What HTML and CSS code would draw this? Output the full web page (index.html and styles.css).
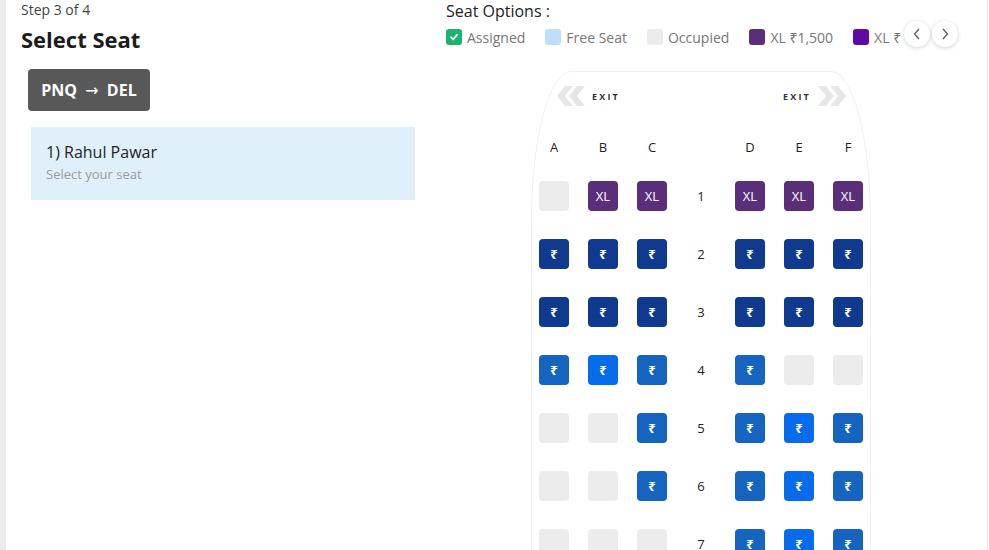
FILE: index.html
```html
<!DOCTYPE html>
<html lang="en">
<head>
<meta charset="utf-8">
<title>Select Seat</title>
<link rel="stylesheet" href="styles.css">
</head>
<body>
<div class="page">
  <div class="rail"></div>
  <section class="left">
    <div class="step">Step 3 of 4</div>
    <h1 class="title">Select Seat</h1>
    <button class="route">PNQ <span class="arrow">→</span> DEL</button>
    <div class="pax">
      <div class="pax-name">1) Rahul Pawar</div>
      <div class="pax-sub">Select your seat</div>
    </div>
  </section>
  <section class="right">
    <div class="opt-title">Seat Options :</div>
    <div class="legend-row">
      <div class="legend">
        <span class="lg"><span class="sw sw-check"><svg width="10" height="10" viewBox="0 0 10 10"><path d="M2 5.2 L4.2 7.3 L8 2.8" fill="none" stroke="#fff" stroke-width="1.8" stroke-linecap="round" stroke-linejoin="round"/></svg></span>Assigned</span>
        <span class="lg"><span class="sw sw-free"></span>Free Seat</span>
        <span class="lg"><span class="sw sw-occ"></span>Occupied</span>
        <span class="lg"><span class="sw sw-xl"></span>XL ₹1,500</span>
        <span class="lg"><span class="sw sw-xl2"></span>XL ₹1,000</span>
      </div>
      <button class="nav"><svg width="10" height="12" viewBox="0 0 10 12"><path d="M7 1 L2.5 6 L7 11" fill="none" stroke="#555" stroke-width="1.2"/></svg></button>
      <button class="nav"><svg width="10" height="12" viewBox="0 0 10 12"><path d="M3 1 L7.5 6 L3 11" fill="none" stroke="#555" stroke-width="1.2"/></svg></button>
    </div>
    <div class="plane">
      <div class="exit-row">
        <div class="exit exit-l">
          <svg width="32" height="20" viewBox="0 0 32 20"><path d="M10 0 H18 L10 10 L18 20 H10 L2 10 Z" fill="#e6e6e6"/><path d="M22 0 H30 L22 10 L30 20 H22 L14 10 Z" fill="#e6e6e6"/></svg>
          <span class="exit-t">EXIT</span>
        </div>
        <div class="exit exit-r">
          <span class="exit-t">EXIT</span>
          <svg width="32" height="20" viewBox="0 0 32 20"><path d="M2 0 H10 L18 10 L10 20 H2 L10 10 Z" fill="#e6e6e6"/><path d="M14 0 H22 L30 10 L22 20 H14 L22 10 Z" fill="#e6e6e6"/></svg>
        </div>
      </div>
      <div class="cols">
        <span>A</span><span>B</span><span>C</span><span></span><span>D</span><span>E</span><span>F</span>
      </div>
      <div class="grid">
        <span class="seat occ"></span><span class="seat xl">XL</span><span class="seat xl">XL</span><span class="rn">1</span><span class="seat xl">XL</span><span class="seat xl">XL</span><span class="seat xl">XL</span>

        <span class="seat dk">₹</span><span class="seat dk">₹</span><span class="seat dk">₹</span><span class="rn">2</span><span class="seat dk">₹</span><span class="seat dk">₹</span><span class="seat dk">₹</span>

        <span class="seat dk">₹</span><span class="seat dk">₹</span><span class="seat dk">₹</span><span class="rn">3</span><span class="seat dk">₹</span><span class="seat dk">₹</span><span class="seat dk">₹</span>

        <span class="seat md">₹</span><span class="seat br">₹</span><span class="seat md">₹</span><span class="rn">4</span><span class="seat md">₹</span><span class="seat occ"></span><span class="seat occ"></span>

        <span class="seat occ"></span><span class="seat occ"></span><span class="seat md">₹</span><span class="rn">5</span><span class="seat md">₹</span><span class="seat br">₹</span><span class="seat md">₹</span>

        <span class="seat occ"></span><span class="seat occ"></span><span class="seat md">₹</span><span class="rn">6</span><span class="seat md">₹</span><span class="seat br">₹</span><span class="seat md">₹</span>

        <span class="seat occ"></span><span class="seat occ"></span><span class="seat occ"></span><span class="rn">7</span><span class="seat md">₹</span><span class="seat br">₹</span><span class="seat md">₹</span>
      </div>
    </div>
  </section>
</div>
</body>
</html>
```
FILE: styles.css
```css
* { box-sizing: border-box; }
html, body { margin: 0; padding: 0; background: #fff; }
body {
  font-family: "Open Sans", "Noto Sans", "DejaVu Sans", sans-serif;
  width: 989px;
  height: 550px;
  overflow: hidden;
}
.page {
  display: flex;
  width: 988px;
  height: 550px;
  border-right: 1px solid #e8e8e8;
}
.rail { width: 6px; flex: none; background: #ececec; }
.left {
  width: 440px;
  flex: none;
  padding-left: 15px;
}
.step {
  font-size: 14px;
  line-height: 20px;
  color: #444;
}
.title {
  margin: 4px 0 0;
  font-size: 22px;
  line-height: 30px;
  font-weight: 700;
  color: #1c1c1c;
}
.route {
  display: block;
  margin: 15px 0 0 7px;
  width: 122px;
  height: 42px;
  border: 0;
  border-radius: 4px;
  background: #585858;
  color: #fff;
  font-family: inherit;
  font-size: 16px;
  font-weight: 700;
  padding: 0;
}
.route .arrow { margin: 0 4px; font-weight: 400; }
.pax {
  margin: 16px 0 0 10px;
  width: 384px;
  height: 73px;
  background: #e0f0fb;
  padding: 13px 15px 0;
}
.pax-name { font-size: 16px; line-height: 24px; color: #222; }
.pax-sub { font-size: 13px; line-height: 20px; color: #9a9a9a; }

.right { flex: 1; }
.opt-title {
  font-size: 16px;
  line-height: 22px;
  color: #222;
  font-weight: 500;
}
.legend-row {
  display: flex;
  align-items: center;
  height: 26px;
  margin-top: 2px;
}
.legend {
  width: 456px;
  flex: none;
  display: flex;
  gap: 20px;
  overflow: hidden;
  white-space: nowrap;
}
.lg {
  display: flex;
  align-items: center;
  gap: 5px;
  font-size: 14px;
  color: #777;
  flex: none;
}
.sw {
  width: 16px;
  height: 16px;
  border-radius: 3px;
  display: flex;
  align-items: center;
  justify-content: center;
}
.sw-check { background: #1db36e; }
.sw-free { background: #bddff7; }
.sw-occ { background: #ececec; }
.sw-xl { background: #5a2e78; }
.sw-xl2 { background: #5d0aa7; }
.nav {
  width: 26px;
  height: 26px;
  border-radius: 50%;
  border: 0;
  background: #fff;
  box-shadow: 0 1px 4px rgba(0,0,0,0.18);
  display: flex;
  align-items: center;
  justify-content: center;
  padding: 0;
  margin-left: 2px;
  margin-top: -6px;
}
.plane {
  margin: 21px 0 0 85px;
  width: 340px;
  height: 600px;
  border: 1px solid #efefef;
  border-bottom: 0;
  border-radius: 40px 40px 0 0 / 150px 150px 0 0;
  padding: 14px 7px 0 7px;
}
.exit-row {
  display: flex;
  justify-content: space-between;
  padding: 0 15px 0 16px;
  height: 20px;
}
.exit { display: flex; align-items: center; gap: 5px; }
.exit-t {
  font-size: 9px;
  font-weight: 700;
  letter-spacing: 2.2px;
  color: #333;
}
.cols {
  display: grid;
  grid-template-columns: repeat(7, 30px);
  column-gap: 19px;
  margin-top: 31px;
  height: 20px;
  line-height: 20px;
  font-size: 13px;
  color: #222;
  text-align: center;
}
.grid {
  display: grid;
  grid-template-columns: repeat(7, 30px);
  grid-auto-rows: 30px;
  column-gap: 19px;
  row-gap: 28px;
  margin-top: 24px;
}
.seat {
  width: 30px;
  height: 30px;
  border-radius: 4px;
  display: flex;
  align-items: center;
  justify-content: center;
  color: #fff;
  font-size: 13px;
  font-weight: 700;
}
.rn {
  display: flex;
  align-items: center;
  justify-content: center;
  font-size: 13px;
  color: #222;
}
.occ { background: #ececec; }
.xl { background: #5a2e78; font-size: 13px; font-weight: 400; }
.dk { background: #0f3a8f; }
.md { background: #1565c0; }
.br { background: #066ceb; }
```
